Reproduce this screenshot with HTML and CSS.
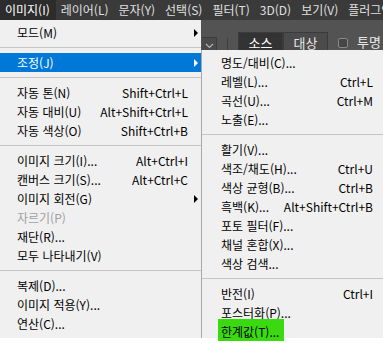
FILE: index.html
```html
<!DOCTYPE html>
<html lang="ko">
<head>
    <meta charset="UTF-8">
    <title>이미지 메뉴</title>
    <link rel="stylesheet" href="styles.css">
</head>
<body>
    <div class="menubar">
        <span class="open">이미지(I)</span>
        <span>레이어(L)</span>
        <span>문자(Y)</span>
        <span>선택(S)</span>
        <span>필터(T)</span>
        <span>3D(D)</span>
        <span>보기(V)</span>
        <span>플러그인(G)</span>
    </div>
    <div class="workspace">
        <div class="menu main-menu">
            <div class="item"><span>모드(M)</span><i></i><b class="arrow"></b></div>
            <div class="sep"></div>
            <div class="item active"><span>조정(J)</span><i></i><b class="arrow"></b></div>
            <div class="sep"></div>
            <div class="item"><span>자동 톤(N)</span><i>Shift+Ctrl+L</i><b></b></div>
            <div class="item"><span>자동 대비(U)</span><i>Alt+Shift+Ctrl+L</i><b></b></div>
            <div class="item"><span>자동 색상(O)</span><i>Shift+Ctrl+B</i><b></b></div>
            <div class="sep"></div>
            <div class="item"><span>이미지 크기(I)...</span><i>Alt+Ctrl+I</i><b></b></div>
            <div class="item"><span>캔버스 크기(S)...</span><i>Alt+Ctrl+C</i><b></b></div>
            <div class="item"><span>이미지 회전(G)</span><i></i><b class="arrow"></b></div>
            <div class="item disabled"><span>자르기(P)</span><i></i><b></b></div>
            <div class="item"><span>재단(R)...</span><i></i><b></b></div>
            <div class="item"><span>모두 나타내기(V)</span><i></i><b></b></div>
            <div class="sep"></div>
            <div class="item"><span>복제(D)...</span><i></i><b></b></div>
            <div class="item"><span>이미지 적용(Y)...</span><i></i><b></b></div>
            <div class="item"><span>연산(C)...</span><i></i><b></b></div>
        </div>
        <div class="right-col">
            <div class="optbar">
                <div class="dd">
                    <svg width="9" height="6" viewBox="0 0 9 6"><path d="M1 1 L4.5 4.5 L8 1" fill="none" stroke="#b4b4b4" stroke-width="1.2"/></svg>
                </div>
                <div class="divider"></div>
                <div class="seg">
                    <span class="on">소스</span>
                    <span>대상</span>
                </div>
                <div class="chk"></div>
                <span class="chk-label">투명</span>
            </div>
            <div class="menu sub-menu">
                <div class="item"><span>명도/대비(C)...</span><i></i></div>
                <div class="item"><span>레벨(L)...</span><i>Ctrl+L</i></div>
                <div class="item"><span>곡선(U)...</span><i>Ctrl+M</i></div>
                <div class="item"><span>노출(E)...</span><i></i></div>
                <div class="sep"></div>
                <div class="item"><span>활기(V)...</span><i></i></div>
                <div class="item"><span>색조/채도(H)...</span><i>Ctrl+U</i></div>
                <div class="item"><span>색상 균형(B)...</span><i>Ctrl+B</i></div>
                <div class="item"><span>흑백(K)...</span><i>Alt+Shift+Ctrl+B</i></div>
                <div class="item"><span>포토 필터(F)...</span><i></i></div>
                <div class="item"><span>채널 혼합(X)...</span><i></i></div>
                <div class="item"><span>색상 검색...</span><i></i></div>
                <div class="sep"></div>
                <div class="item"><span>반전(I)</span><i>Ctrl+I</i></div>
                <div class="item"><span>포스터화(P)...</span><i></i></div>
                <div class="item"><span class="marker">한계값(T)...</span><i></i></div>
            </div>
        </div>
    </div>
</body>
</html>
```

FILE: styles.css
```css
body {
    margin: 0;
    width: 383px;
    height: 343px;
    overflow: hidden;
    background-color: #ffffff;
    font-family: "Noto Sans CJK KR", sans-serif;
    font-size: 12px;
    color: #000000;
}

/* top bar of the app */
.menubar {
    display: flex;
    height: 20px;
    background-color: #3a3a3a;
    color: #e0e0e0;
    white-space: nowrap;
    overflow: hidden;
}

.menubar span {
    padding: 0 5px;
    line-height: 20px;
}

.menubar span:first-child {
    padding-left: 5px;
}

.menubar .open {
    background-color: #2c2c2c;
    color: #ffffff;
    padding-right: 6px;
}

.workspace {
    display: flex;
    align-items: flex-start;
}

/* shared menu look */
.menu {
    background-color: #f0f0f0;
    box-sizing: border-box;
}

.menu .item {
    display: flex;
    align-items: center;
    height: 19px;
    line-height: 19px;
    white-space: nowrap;
}

.menu .item span {
    flex: 1;
}

.menu .item i {
    font-style: normal;
}

.menu .sep {
    height: 11px;
    position: relative;
}

.menu .sep::after {
    content: "";
    position: absolute;
    left: 0;
    right: 0;
    top: 5px;
    height: 1px;
    background-color: #c6c6c6;
}

.main-menu {
    width: 201px;
    height: 318px;
    padding-top: 3px;
}

.main-menu .item {
    padding-left: 17px;
}

.main-menu .item b {
    width: 13px;
    height: 19px;
    flex-shrink: 0;
    position: relative;
}

.main-menu .item b.arrow::after {
    content: "";
    position: absolute;
    left: 6px;
    top: 6px;
    border-left: 4px solid #000000;
    border-top: 4px solid transparent;
    border-bottom: 4px solid transparent;
}

.main-menu .item.active {
    background-color: #0078d7;
    color: #ffffff;
}

.main-menu .item.active b.arrow::after {
    border-left-color: #ffffff;
}

.main-menu .item.disabled {
    color: #a0a0a0;
}

.right-col {
    flex: 1;
    display: flex;
    flex-direction: column;
}

/* options bar behind the menus */
.optbar {
    height: 30px;
    background-color: #535353;
    display: flex;
    align-items: flex-start;
    color: #e8e8e8;
    font-size: 13px;
}

.dd {
    width: 15px;
    height: 13px;
    margin: 17px 0 0 1px;
    background-color: #4a4a4a;
    border: 1px solid #3d3d3d;
    border-left: none;
    border-bottom: none;
    display: flex;
    justify-content: center;
    padding-top: 5px;
    box-sizing: border-box;
}

.divider {
    width: 1px;
    height: 12px;
    margin: 18px 0 0 10px;
    background-color: #3e3e3e;
}

.seg {
    display: flex;
    margin: 12px 0 0 10px;
}

.seg span {
    width: 45px;
    height: 18px;
    padding-top: 2px;
    line-height: 16px;
    text-align: center;
    box-sizing: border-box;
    border: 1px solid #3b3b3b;
    border-bottom: none;
    background-color: #4b4b4b;
}

.seg span.on {
    background-color: #333333;
    color: #ffffff;
}

.chk {
    width: 8px;
    height: 8px;
    margin: 18px 0 0 10px;
    border: 1px solid #888888;
    border-radius: 2px;
    background-color: #464646;
}

.chk-label {
    margin: 14px 0 0 9px;
    line-height: 16px;
}

.sub-menu {
    height: 288px;
    border-left: 1px solid #a8a8a8;
    padding: 3px 10px 0 0;
}

.sub-menu .item {
    padding-left: 19px;
}

.sub-menu .sep {
    margin-right: -10px;
}

.marker {
    flex: none !important;
    background-color: #3ad910;
    margin: -3px 0 0 -3px;
    padding: 3px 5px 0 3px;
    height: 19px;
    line-height: 19px;
}
```
